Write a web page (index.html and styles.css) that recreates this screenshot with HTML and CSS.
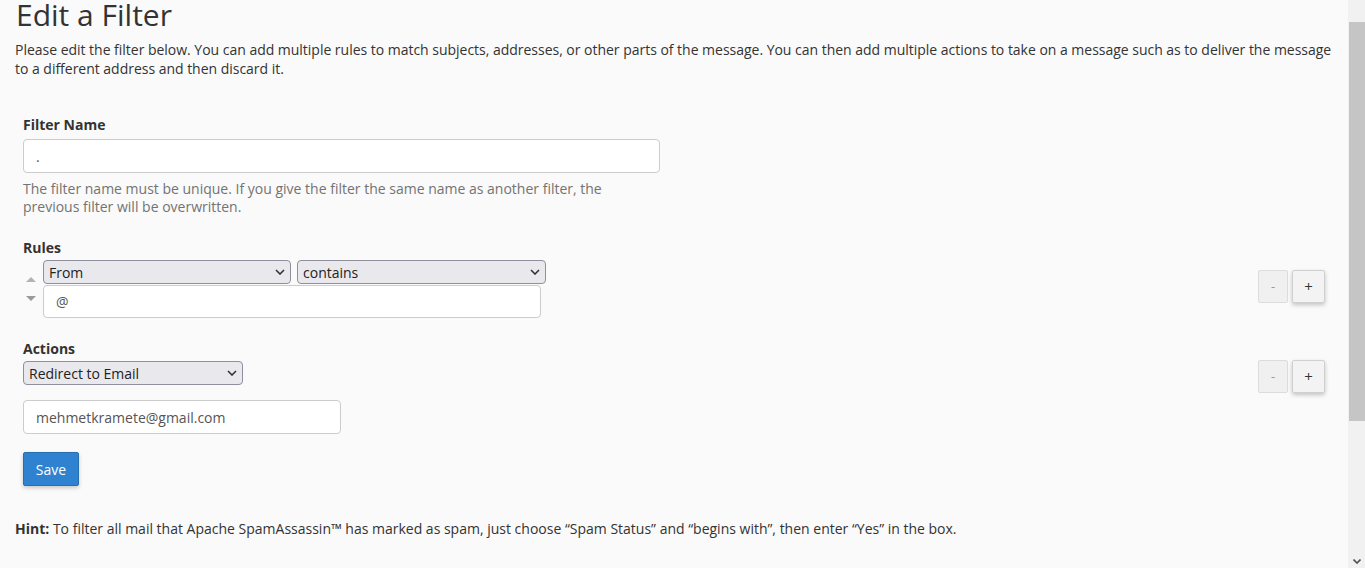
FILE: index.html
```html
<!DOCTYPE html>
<html lang="en">
<head>
<meta charset="utf-8">
<title>Edit a Filter</title>
<link rel="stylesheet" href="styles.css">
</head>
<body>
<div class="page">
  <h1 class="title">Edit a Filter</h1>
  <p class="intro">Please edit the filter below. You can add multiple rules to match subjects, addresses, or other parts of the message. You can then add multiple actions to take on a message such as to deliver the message to a different address and then discard it.</p>

  <form class="filter-form">
    <div class="group">
      <label class="label label-name">Filter Name</label>
      <input class="text-input name-input" type="text" value=".">
      <div class="help">The filter name must be unique. If you give the filter the same name as another filter, the previous filter will be overwritten.</div>
    </div>

    <label class="label label-rules">Rules</label>
    <div class="row rule-row">
      <div class="rule">
        <div class="arrows">
          <span class="tri tri-up"></span>
          <span class="tri tri-down"></span>
        </div>
        <div class="rule-fields">
          <div class="select-pair">
            <span class="select-wrap w-from">
              <select class="select"><option>From</option></select>
              <svg class="chev" viewBox="0 0 10 6" width="10" height="6"><path d="M1 1l4 4 4-4" fill="none" stroke="#333" stroke-width="1.6"/></svg>
            </span>
            <span class="select-wrap w-contains">
              <select class="select"><option>contains</option></select>
              <svg class="chev" viewBox="0 0 10 6" width="10" height="6"><path d="M1 1l4 4 4-4" fill="none" stroke="#333" stroke-width="1.6"/></svg>
            </span>
          </div>
          <input class="text-input rule-input" type="text" value="@">
        </div>
      </div>
      <div class="btns btns-rule">
        <button type="button" class="btn-minus">-</button>
        <button type="button" class="btn-plus">+</button>
      </div>
    </div>

    <label class="label label-actions">Actions</label>
    <div class="row action-row">
      <div class="action">
        <span class="select-wrap w-action">
          <select class="select"><option>Redirect to Email</option></select>
          <svg class="chev" viewBox="0 0 10 6" width="10" height="6"><path d="M1 1l4 4 4-4" fill="none" stroke="#333" stroke-width="1.6"/></svg>
        </span>
        <input class="text-input email-input" type="text" value="mehmetkramete@gmail.com">
      </div>
      <div class="btns btns-action">
        <button type="button" class="btn-minus">-</button>
        <button type="button" class="btn-plus">+</button>
      </div>
    </div>

    <button type="button" class="btn-save">Save</button>
  </form>

  <p class="hint"><strong>Hint:</strong> To filter all mail that Apache SpamAssassin™ has marked as spam, just choose “Spam Status” and “begins with”, then enter “Yes” in the box.</p>
</div>

<div class="scrollbar">
  <div class="thumb"></div>
  <svg class="scroll-down" viewBox="0 0 8 5" width="8" height="5"><path d="M0.5 0.5l3.5 3.5 3.5-3.5" fill="none" stroke="#505050" stroke-width="1.6"/></svg>
</div>
</body>
</html>
```

FILE: styles.css
```css
html, body {
  margin: 0;
  padding: 0;
  height: 568px;
  overflow: hidden;
  background: #fafafa;
}

body {
  font-family: "Open Sans", "Liberation Sans", sans-serif;
  font-size: 14px;
  color: #333;
}

.page {
  width: 1348px;
  box-sizing: border-box;
  padding: 0 8px 0 15px;
}

.title {
  margin: -1px 0 0 1px;
  font-size: 30px;
  line-height: 31px;
  font-weight: 400;
  color: #333;
}

.intro {
  margin: 10px 0 0;
  line-height: 19px;
  color: #333;
  letter-spacing: -0.02px;
}

.filter-form {
  padding: 0 15px 0 8px;
}

.label {
  display: block;
  font-weight: 700;
  line-height: 20px;
  color: #333;
}

.label-name { margin-top: 37px; margin-bottom: 4px; }

.text-input {
  display: block;
  box-sizing: border-box;
  border: 1px solid #ccc;
  border-radius: 4px;
  background: #fff;
  font-family: "Open Sans", "Liberation Sans", sans-serif;
  font-size: 14px;
  color: #555;
  padding: 0 12px;
  margin: 0;
  outline: none;
}

.name-input { width: 637px; height: 34px; }

.help {
  width: 637px;
  margin-top: 7px;
  font-size: 14px;
  line-height: 18px;
  color: #737373;
}

.label-rules { margin-top: 22px; margin-bottom: 2px; }

.row {
  display: flex;
  justify-content: space-between;
  align-items: flex-start;
}

.rule { display: flex; }

.arrows {
  width: 20px;
  display: flex;
  flex-direction: column;
  align-items: center;
  padding-top: 17px;
}

.tri {
  width: 0;
  height: 0;
  border-left: 5px solid transparent;
  border-right: 5px solid transparent;
  margin-left: -4px;
}
.tri-up { border-bottom: 5px solid #b3b3b3; }
.tri-down { border-top: 5px solid #9a9a9a; margin-top: 14px; }

.select-pair { display: flex; gap: 6px; }

.select-wrap {
  position: relative;
  display: block;
}

.select {
  display: block;
  width: 100%;
  height: 24px;
  box-sizing: border-box;
  -webkit-appearance: none;
  appearance: none;
  background: #e9e9ed;
  border: 1px solid #8f8f9d;
  border-radius: 4px;
  font-family: "Open Sans", "Liberation Sans", sans-serif;
  font-size: 14px;
  color: #222;
  padding: 0 20px 0 5px;
  margin: 0;
  outline: none;
}

.chev {
  position: absolute;
  right: 6px;
  top: 9px;
  pointer-events: none;
}

.w-from { width: 248px; }
.w-contains { width: 249px; }
.w-action { width: 220px; }

.rule-input { width: 498px; height: 33px; margin-top: 1px; }

.btns { display: flex; gap: 4px; }
.btns-rule { margin-top: 10px; }
.btns-action { margin-top: -1px; }

.btn-minus, .btn-plus {
  box-sizing: border-box;
  height: 33px;
  padding: 0;
  border-radius: 2px;
  font-family: "Open Sans", "Liberation Sans", sans-serif;
  font-size: 13px;
  line-height: 1;
}

.btn-minus {
  width: 30px;
  background: #f0f0f0;
  border: 1px solid #dcdcdc;
  color: #9a9a9a;
}

.btn-plus {
  width: 33px;
  background: #f3f3f3;
  border: 1px solid #d0d0d0;
  color: #333;
  font-size: 15px;
  box-shadow: 0 2px 4px rgba(0, 0, 0, 0.22);
}

.label-actions { margin-top: 21px; margin-bottom: 2px; }

.email-input { width: 318px; height: 34px; margin-top: 15px; }

.btn-save {
  display: block;
  margin-top: 18px;
  width: 56px;
  height: 34px;
  box-sizing: border-box;
  background: #2f82cf;
  border: 1px solid #286fb0;
  border-radius: 2px;
  color: #fff;
  font-family: "Open Sans", "Liberation Sans", sans-serif;
  font-size: 14px;
  padding: 0;
  box-shadow: 0 2px 4px rgba(0, 0, 0, 0.2);
}

.hint {
  margin: 33px 0 0;
  line-height: 20px;
  color: #333;
}

.hint strong { font-weight: 700; }

.scrollbar {
  position: fixed;
  top: 0;
  right: 0;
  width: 17px;
  height: 568px;
  background: #f1f1f1;
}

.thumb {
  position: absolute;
  left: 1px;
  right: 0;
  top: 22px;
  height: 399px;
  background: #c5c5c5;
}

.scroll-down {
  position: absolute;
  left: 5px;
  bottom: 4px;
}
```
